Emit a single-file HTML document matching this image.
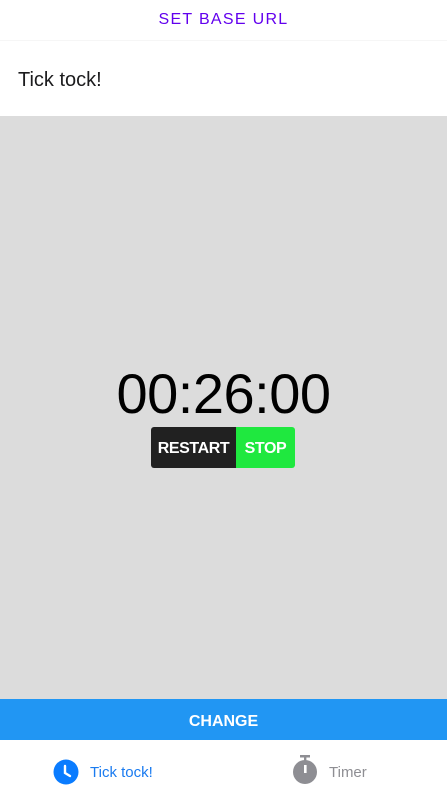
<!DOCTYPE html>
<html><head><meta charset="utf-8"><style>
*{margin:0;padding:0;box-sizing:border-box}
body{width:447px;height:797px;overflow:hidden;background:#fff;font-family:"Liberation Sans",sans-serif;position:relative}
.top{position:absolute;top:0;left:0;width:447px;height:40px;text-align:center;color:#6200ee;font-size:16px;letter-spacing:1.3px;line-height:39px}
.hdr{position:absolute;top:40px;left:0;width:447px;height:76px;border-top:1px solid #f6f6f6}
.hdr span{position:absolute;left:18px;top:28px;font-size:20px;color:#1c1c1e}
.main{position:absolute;top:116px;left:0;width:447px;height:583px;background:#dcdcdc}
.time{position:absolute;top:248px;left:0;width:447px;text-align:center;font-size:56px;color:#000;line-height:60px;letter-spacing:-0.5px}
.btn{position:absolute;top:311px;height:41px;color:#fff;font-weight:bold;font-size:16px;line-height:43px;text-align:center;letter-spacing:-0.4px}
.r{left:151px;width:85px;background:#212121;border-radius:3px 0 0 3px}
.s{left:236px;width:59px;background:#1fe83f;border-radius:0 3px 3px 0}
.chg{position:absolute;top:699px;left:0;width:447px;height:41px;background:#2196f3;color:#fff;font-weight:bold;font-size:16px;line-height:45px;text-align:center}
.tab{position:absolute;top:740px;height:57px;font-size:15px;line-height:66px}
</style></head><body>
<div class="top">SET BASE URL</div>
<div class="hdr"><span>Tick tock!</span></div>
<div class="main">
<div class="time">00:26:00</div>
<div class="btn r">RESTART</div><div class="btn s">STOP</div>
</div>
<div class="chg">CHANGE</div>
<div class="tab" style="left:53px;color:#1a7bf0">
<svg width="26" height="26" viewBox="0 0 26 26" style="position:absolute;left:0;top:19px"><circle cx="13" cy="13" r="12.5" fill="#0a7cff"/><path d="M12 7v7l5 3" stroke="#fff" stroke-width="2.4" fill="none" stroke-linecap="round"/></svg>
<span style="position:absolute;left:37px;white-space:nowrap">Tick tock!</span></div>
<div class="tab" style="left:292px;color:#8e8e93">
<svg width="26" height="30" viewBox="0 0 26 30" style="position:absolute;left:0;top:15px"><rect x="8" y="0" width="10" height="2.5" fill="#8e8e93"/><rect x="12" y="2" width="2.4" height="4" fill="#8e8e93"/><circle cx="13" cy="17" r="12" fill="#8e8e93"/><rect x="12" y="10" width="2.6" height="8" fill="#fff"/></svg>
<span style="position:absolute;left:37px">Timer</span></div>
</body></html>
